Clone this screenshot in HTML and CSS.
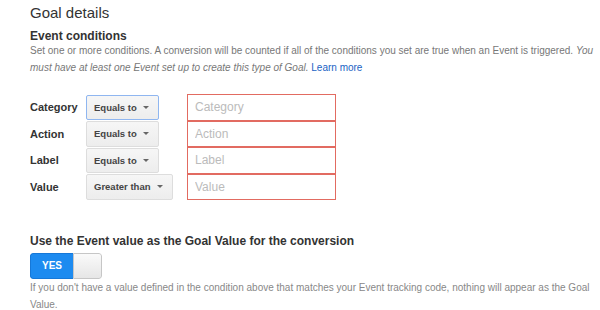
FILE: index.html
```html
<!DOCTYPE html>
<html>
<head>
<meta charset="utf-8">
<link rel="stylesheet" href="styles.css">
</head>
<body>
<div class="page">
  <h1 class="title">Goal details</h1>
  <h2 class="subtitle">Event conditions</h2>
  <p class="intro">Set one or more conditions. A conversion will be counted if all of the conditions you set are true when an Event is triggered. <em>You</em> <em>must have at least one Event set up to create this type of Goal.</em> <a class="link" href="#">Learn more</a></p>

  <div class="conditions">
    <div class="cond-label">Category</div>
    <div class="cond-select"><span class="select focused">Equals to<span class="caret"></span></span></div>
    <div class="cond-input"><input class="field" type="text" placeholder="Category"></div>

    <div class="cond-label">Action</div>
    <div class="cond-select"><span class="select">Equals to<span class="caret"></span></span></div>
    <div class="cond-input"><input class="field" type="text" placeholder="Action"></div>

    <div class="cond-label">Label</div>
    <div class="cond-select"><span class="select">Equals to<span class="caret"></span></span></div>
    <div class="cond-input"><input class="field" type="text" placeholder="Label"></div>

    <div class="cond-label">Value</div>
    <div class="cond-select"><span class="select">Greater than<span class="caret"></span></span></div>
    <div class="cond-input"><input class="field" type="text" placeholder="Value"></div>
  </div>

  <h2 class="subtitle section2">Use the Event value as the Goal Value for the conversion</h2>
  <div class="toggle">
    <span class="toggle-on">YES</span>
    <span class="toggle-knob"></span>
  </div>
  <p class="note">If you don't have a value defined in the condition above that matches your Event tracking code, nothing will appear as the Goal Value.</p>
</div>
</body>
</html>
```

FILE: styles.css
```css
html, body {
  margin: 0;
  padding: 0;
  background: #ffffff;
}

body {
  font-family: "Liberation Sans", Arial, Helvetica, sans-serif;
  color: #333333;
}

.page {
  padding: 0 4px 0 30px;
}

.title {
  margin: 4px 0 0 0;
  font-size: 15px;
  line-height: 18px;
  font-weight: normal;
  color: #333333;
}

.subtitle {
  margin: 7px 0 0 0;
  font-size: 12px;
  line-height: 14px;
  font-weight: bold;
  color: #333333;
}

.intro {
  margin: 0;
  font-size: 10px;
  line-height: 16.5px;
  color: #777777;
}

.intro em {
  font-style: italic;
}

.link {
  color: #1a62c4;
  text-decoration: none;
}

.conditions {
  margin-top: 18px;
  display: grid;
  grid-template-columns: 56px 101px 149px;
  grid-auto-rows: 26.5px;
}

.cond-label {
  display: flex;
  align-items: center;
  font-size: 11px;
  font-weight: bold;
  color: #333333;
}

.cond-select {
  display: flex;
  align-items: center;
}

.select {
  box-sizing: border-box;
  height: 25.5px;
  display: inline-flex;
  align-items: center;
  padding: 0 9px 0 7px;
  font-size: 9.5px;
  font-weight: bold;
  color: #444444;
  background: linear-gradient(#f6f6f6, #ededed);
  border: 1px solid #dddddd;
  border-radius: 2px;
}

.select.focused {
  border-color: #8fb6f0;
}

.caret {
  margin-left: 6px;
  width: 0;
  height: 0;
  border-left: 3px solid transparent;
  border-right: 3px solid transparent;
  border-top: 3.5px solid #666666;
}

.cond-input {
  display: flex;
}

.field {
  box-sizing: border-box;
  width: 149px;
  height: 26.5px;
  margin: 0;
  padding: 0 0 0 7px;
  border: 1px solid #e26b61;
  border-radius: 0;
  font-family: "Liberation Sans", Arial, sans-serif;
  font-size: 12px;
  color: #333333;
  background: #ffffff;
  outline: none;
}

.field::placeholder {
  color: #bbbbbb;
}

.section2 {
  margin-top: 34px;
}

.toggle {
  margin-top: 5px;
  width: 72px;
  height: 25.5px;
  display: flex;
  box-sizing: border-box;
  border-radius: 3px;
  overflow: hidden;
}

.toggle-on {
  width: 43px;
  display: flex;
  align-items: center;
  justify-content: center;
  background: #1d8bf0;
  border: 1px solid #1678d8;
  border-right: none;
  border-radius: 3px 0 0 3px;
  color: #ffffff;
  font-size: 10px;
  font-weight: bold;
  box-sizing: border-box;
}

.toggle-knob {
  flex: 1;
  box-sizing: border-box;
  background: linear-gradient(#fafafa, #e6e6e6);
  border: 1px solid #c6c6c6;
  border-radius: 0 3px 3px 0;
}

.note {
  margin: 0;
  font-size: 10px;
  line-height: 17px;
  color: #888888;
}
```
